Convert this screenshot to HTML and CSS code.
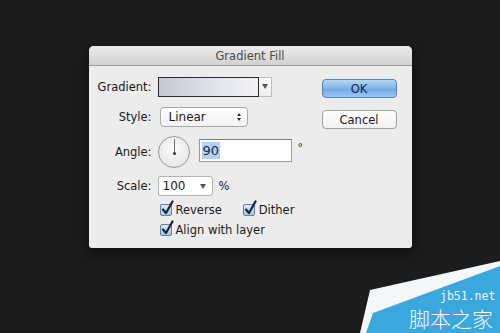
FILE: index.html
```html
<!DOCTYPE html>
<html>
<head>
  <title>Gradient Fill</title>
  <link rel="stylesheet" href="styles.css">
</head>
<body>
<div class="dialog">
  <div class="titlebar">Gradient Fill</div>
  <div class="content">
    <div class="form">
      <div class="row row-gradient">
        <span class="lbl">Gradient:</span>
        <div class="swatch"></div>
        <div class="swatch-arrow"><span class="tri"></span></div>
      </div>
      <div class="row row-style">
        <span class="lbl">Style:</span>
        <div class="select">Linear<span class="updown"><i class="up"></i><i class="down"></i></span></div>
      </div>
      <div class="row row-angle">
        <span class="lbl">Angle:</span>
        <div class="dial"><span class="hand"></span><span class="pin"></span></div>
        <div class="field"><span class="sel">90</span></div>
        <span class="deg">°</span>
      </div>
      <div class="row row-scale">
        <span class="lbl">Scale:</span>
        <div class="combo">100<span class="tri"></span></div>
        <span class="unit">%</span>
      </div>
      <div class="checks">
        <div class="check-row">
          <label class="check"><span class="cb"><svg viewBox="0 0 14 16" width="14" height="16"><path d="M3 9.5 L6 13 L12.5 1.5" /></svg></span>Reverse</label>
          <label class="check check-dither"><span class="cb"><svg viewBox="0 0 14 16" width="14" height="16"><path d="M3 9.5 L6 13 L12.5 1.5" /></svg></span>Dither</label>
        </div>
        <div class="check-row second">
          <label class="check"><span class="cb"><svg viewBox="0 0 14 16" width="14" height="16"><path d="M3 9.5 L6 13 L12.5 1.5" /></svg></span>Align with layer</label>
        </div>
      </div>
    </div>
    <div class="buttons">
      <button class="btn btn-ok">OK</button>
      <button class="btn btn-cancel">Cancel</button>
    </div>
  </div>
</div>

<div class="watermark">
  <svg class="wm-shape" viewBox="0 0 140 73" width="140" height="73">
    <polygon points="10,30 140,1 140,73 0,73" fill="#f4f7f9"/>
    <polygon points="13,53 140,6 140,73 6,73" fill="#3aa8dc"/>
  </svg>
  <span class="wm-url">jb51.net</span>
  <span class="wm-name">脚本之家</span>
</div>
</body>
</html>
```

FILE: styles.css
```css
html, body {
  margin: 0;
  height: 100%;
  background: #1c1c1c;
  font-family: "DejaVu Sans", sans-serif;
  font-size: 11.5px;
  color: #1a1a1a;
  overflow: hidden;
}

.dialog {
  width: 323px;
  margin: 46px auto 0;
  background: #ececec;
  border-radius: 5px 5px 3px 3px;
  box-shadow: 0 4px 14px rgba(0, 0, 0, 0.6);
}

.titlebar {
  height: 19px;
  line-height: 20px;
  text-align: center;
  color: #4a4a4a;
  background: linear-gradient(#ececec, #d2d2d2);
  border-bottom: 1px solid #9c9c9c;
  border-radius: 5px 5px 0 0;
}

.content {
  display: flex;
  padding: 11px 15px 11px 0;
}

.form {
  flex: 1;
}

.row {
  display: flex;
  align-items: center;
  height: 20px;
}
.row-style { margin-top: 10px; }
.row-angle { margin-top: 9px; height: 32px; }
.row-scale { margin-top: 8px; }

.lbl {
  width: 63px;
  margin-right: 6px;
  text-align: right;
}

.swatch {
  width: 99px;
  height: 18px;
  border: 1px solid #2b2b2b;
  background: linear-gradient(to right, #c4c8d6, #e1e3ec 55%, #f3f3f6);
}
.swatch-arrow {
  width: 12px;
  height: 12px;
  padding-top: 6px;
  border: 1px solid #bcbcbc;
  border-left: none;
  background: linear-gradient(#fdfdfd, #eeeeee);
  display: flex;
  justify-content: center;
}
.tri {
  width: 0;
  height: 0;
  border-left: 3px solid transparent;
  border-right: 3px solid transparent;
  border-top: 5px solid #555;
}

.select {
  position: relative;
  margin-left: 2px;
  width: 78px;
  height: 18px;
  line-height: 18px;
  padding-left: 8px;
  border: 1px solid #a9a9a9;
  border-radius: 4px;
  background: linear-gradient(#ffffff, #f1f1f1);
  font-size: 12px;
}
.updown {
  position: absolute;
  right: 6px;
  top: 5px;
  display: flex;
  flex-direction: column;
  gap: 2px;
}
.updown i {
  width: 0;
  height: 0;
  border-left: 2.5px solid transparent;
  border-right: 2.5px solid transparent;
}
.updown .up { border-bottom: 3px solid #333; }
.updown .down { border-top: 3px solid #333; }

.dial {
  position: relative;
  width: 30px;
  height: 30px;
  border: 1px solid #9a9a9a;
  border-radius: 50%;
  background: radial-gradient(circle at 50% 40%, #fbfbfb, #e2e2e2);
}
.hand {
  position: absolute;
  left: 15px;
  top: 2px;
  width: 1px;
  height: 14px;
  background: #6a6a6a;
}
.pin {
  position: absolute;
  left: 14px;
  top: 15px;
  width: 3px;
  height: 3px;
  border-radius: 50%;
  background: #333;
}

.field {
  margin-left: 9px;
  margin-top: -3px;
  width: 89px;
  height: 21px;
  padding-left: 2px;
  border: 1px solid #9b9b9b;
  border-top-color: #7d7d7d;
  background: #fff;
  display: flex;
  align-items: center;
  font-size: 13px;
}
.sel {
  background: #b3d2f2;
  padding: 1px 1px;
  color: #1d2a45;
}
.deg {
  margin-left: 6px;
  margin-top: -10px;
  font-size: 11px;
}

.combo {
  position: relative;
  width: 49px;
  height: 18px;
  line-height: 18px;
  padding-left: 4px;
  border: 1px solid #b3b3b3;
  border-radius: 2px 3px 3px 2px;
  background: #fff;
  font-size: 12px;
}
.combo .tri {
  position: absolute;
  right: 6px;
  top: 7px;
}
.unit {
  margin-left: 6px;
}

.checks {
  margin-top: 7px;
  padding-left: 71px;
}
.check-row {
  display: flex;
  height: 14px;
  align-items: center;
}
.check-row.second {
  margin-top: 6px;
}
.check {
  display: flex;
  align-items: center;
  gap: 4px;
}
.check-dither {
  margin-left: 21px;
}
.cb {
  position: relative;
  width: 10px;
  height: 10px;
  border: 1px solid #60809f;
  border-radius: 2px;
  background: linear-gradient(#dbe9f7, #a7c6e8);
}
.cb svg {
  position: absolute;
  left: -1px;
  top: -5px;
}
.cb path {
  fill: none;
  stroke: #1b2534;
  stroke-width: 2.2;
  stroke-linecap: round;
  stroke-linejoin: round;
}

.buttons {
  width: 75px;
  display: flex;
  flex-direction: column;
  gap: 12px;
  padding-top: 2px;
}
.btn {
  height: 19px;
  padding: 0;
  font-family: "DejaVu Sans", sans-serif;
  font-size: 11.5px;
  border-radius: 4px;
  color: #1a1a1a;
}
.btn-ok {
  border: 1px solid #5a83b5;
  background: linear-gradient(#b9d7f6, #7fb3ea 50%, #6ea7e6 51%, #9cc8f2);
  color: #14254a;
}
.btn-cancel {
  border: 1px solid #a3a3a3;
  background: linear-gradient(#ffffff, #f0f0f0);
}

.watermark {
  position: absolute;
  right: 0;
  bottom: 0;
  width: 140px;
  height: 73px;
}
.wm-shape {
  position: absolute;
  left: 0;
  top: 0;
}
.wm-url {
  position: absolute;
  left: 80px;
  top: 30px;
  font-family: "DejaVu Sans Mono", monospace;
  font-size: 11.5px;
  line-height: 13px;
  color: #eaf6fc;
}
.wm-name {
  position: absolute;
  left: 49px;
  top: 47px;
  font-family: "Noto Sans CJK SC", sans-serif;
  font-size: 21px;
  line-height: 23px;
  font-weight: 300;
  color: #f4fafd;
}
```
